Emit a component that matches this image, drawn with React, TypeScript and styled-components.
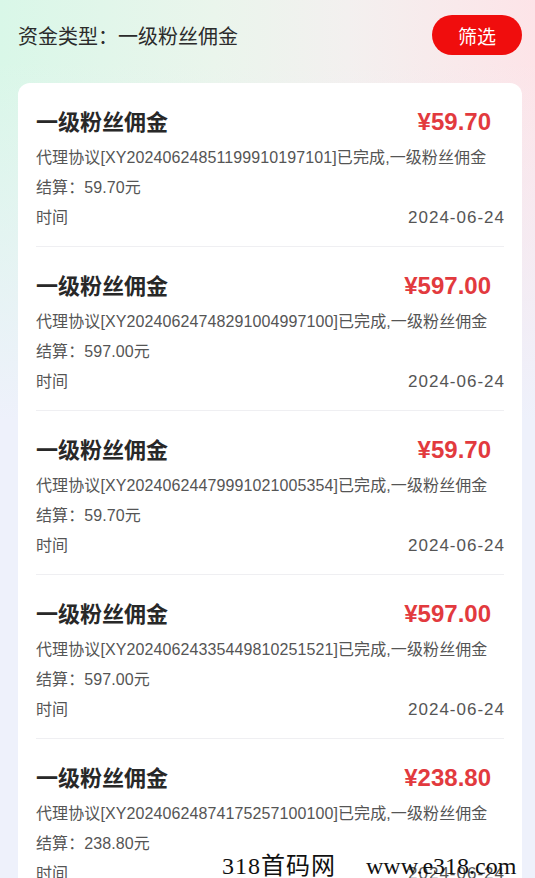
import React from "react";
import styled, { createGlobalStyle } from "styled-components";

interface IRecord {
  amount: string;
  order: string;
  date: string;
}

const records: IRecord[] = [
  { amount: "59.70", order: "XY20240624851199910197101", date: "2024-06-24" },
  { amount: "597.00", order: "XY20240624748291004997100", date: "2024-06-24" },
  { amount: "59.70", order: "XY20240624479991021005354", date: "2024-06-24" },
  { amount: "597.00", order: "XY20240624335449810251521", date: "2024-06-24" },
  { amount: "238.80", order: "XY20240624874175257100100", date: "2024-06-24" },
];

const FONT = `"Liberation Sans", "Noto Sans CJK SC", sans-serif`;

const GlobalStyle = createGlobalStyle`
  html, body {
    margin: 0;
    padding: 0;
    background: #eef1fb;
    font-family: ${FONT};
  }
  body {
    overflow: hidden;
  }
`;

export default function App() {
  return (
    <>
      <GlobalStyle />
      <Page>
        <Header>
          <FilterLabel>资金类型：一级粉丝佣金</FilterLabel>
          <FilterButton>筛选</FilterButton>
        </Header>
        <Card>
          {records.map((r, idx) => (
            <Item key={idx}>
              <TitleRow>
                <Title>一级粉丝佣金</Title>
                <Amount>¥{r.amount}</Amount>
              </TitleRow>
              <Line>代理协议[{r.order}]已完成,一级粉丝佣金</Line>
              <Line>结算：{r.amount}元</Line>
              <MetaRow>
                <span>时间</span>
                <DateText>{r.date}</DateText>
              </MetaRow>
            </Item>
          ))}
        </Card>
        <Watermark>
          <WatermarkName>318首码网</WatermarkName>
          <WatermarkUrl>www.e318.com</WatermarkUrl>
        </Watermark>
      </Page>
    </>
  );
}

const Page = styled.div`
  position: relative;
  width: 535px;
  height: 878px;
  overflow: hidden;
  background: linear-gradient(
      to bottom,
      rgba(238, 241, 251, 0) 0px,
      rgba(238, 241, 251, 0) 60px,
      #eef1fb 420px
    ),
    linear-gradient(to right, #d9f7e8 0%, #eaf5ec 40%, #f3f0ef 65%, #fde4e8 100%);
`;

const Header = styled.div`
  display: flex;
  align-items: center;
  justify-content: space-between;
  padding: 15px 13px 0 18px;
  height: 40px;
`;

const FilterLabel = styled.div`
  font-size: 20px;
  color: #2b2b2b;
`;

const FilterButton = styled.button`
  border: none;
  outline: none;
  width: 90px;
  height: 40px;
  border-radius: 20px;
  background: #f00d0d;
  color: #fff;
  font-family: ${FONT};
  font-size: 19px;
  padding: 0;
`;

const Card = styled.div`
  margin: 28px 13px 0 18px;
  background: #fff;
  border-radius: 12px;
  padding: 0 18px;
`;

const Item = styled.div`
  padding: 24px 0 13px;
  border-bottom: 1px solid #efeff2;
`;

const TitleRow = styled.div`
  display: flex;
  align-items: center;
  justify-content: space-between;
  height: 30px;
  margin-bottom: 6px;
`;

const Title = styled.div`
  font-size: 22px;
  font-weight: 700;
  color: #282828;
  margin-top: -5px;
`;

const Amount = styled.div`
  font-size: 24px;
  font-weight: 700;
  color: #e23a3e;
  margin-right: 13px;
`;

const Line = styled.div`
  font-size: 16px;
  line-height: 30px;
  color: #555;
  white-space: nowrap;
  letter-spacing: 0.1px;
`;

const MetaRow = styled(Line)`
  display: flex;
  justify-content: space-between;
`;

const DateText = styled.span`
  font-size: 17px;
  letter-spacing: 1px;
  margin-right: -1px;
`;

const Watermark = styled.div`
  position: absolute;
  left: 222px;
  bottom: -3px;
  display: flex;
  align-items: baseline;
  gap: 30px;
  font-family: "Liberation Serif", "Noto Sans CJK SC", serif;
  color: #111;
  pointer-events: none;
`;

const WatermarkName = styled.span`
  font-size: 24px;
  letter-spacing: 1px;
`;

const WatermarkUrl = styled.span`
  font-size: 24px;
`;
